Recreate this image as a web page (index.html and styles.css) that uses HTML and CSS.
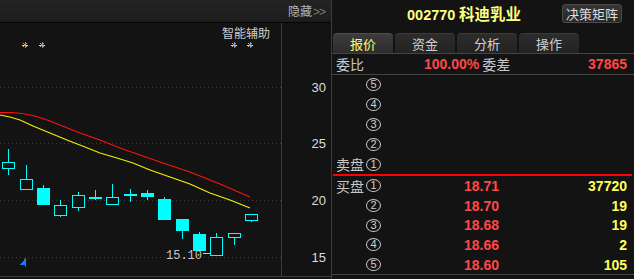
FILE: index.html
```html
<!DOCTYPE html>
<html>
  <head>
    <meta charset="utf-8" />
    <title>002770 科迪乳业</title>
    <link rel="stylesheet" href="styles.css">
  </head>
  <body>
    <div class="screen">
      <div class="chart-panel">
        <div class="chart-top">
          <span class="hide-link">隐藏<span class="chev">&gt;&gt;</span></span>
        </div>
        <svg class="chart" width="331" height="256" viewBox="0 23 331 256" shape-rendering="crispEdges">
          <g class="grid">
            <line x1="0" y1="87.5" x2="281" y2="87.5" />
            <line x1="0" y1="143.5" x2="281" y2="143.5" />
            <line x1="0" y1="200.5" x2="281" y2="200.5" />
            <line x1="0" y1="257.5" x2="281" y2="257.5" />
          </g>
          <line class="frame" x1="281.5" y1="23" x2="281.5" y2="277" />
          <line class="frame" x1="0" y1="276.5" x2="331" y2="276.5" />

          <g class="axis-text">
            <text x="326" y="92">30</text>
            <text x="326" y="148">25</text>
            <text x="326" y="205">20</text>
            <text x="326" y="262">15</text>
          </g>

          <text class="assist" x="270" y="38">智能辅助</text>
          <g class="star" transform="translate(25 45)"><line x1="0" y1="-3" x2="0" y2="3" class="s1" /><line x1="-3" y1="0" x2="3" y2="0" class="s2" /><line x1="-2" y1="-2" x2="2" y2="2" class="s3" /><line x1="-2" y1="2" x2="2" y2="-2" class="s3" /></g>
          <g class="star" transform="translate(42 45)"><line x1="0" y1="-3" x2="0" y2="3" class="s1" /><line x1="-3" y1="0" x2="3" y2="0" class="s2" /><line x1="-2" y1="-2" x2="2" y2="2" class="s3" /><line x1="-2" y1="2" x2="2" y2="-2" class="s3" /></g>
          <g class="star" transform="translate(234 45)"><line x1="0" y1="-3" x2="0" y2="3" class="s1" /><line x1="-3" y1="0" x2="3" y2="0" class="s2" /><line x1="-2" y1="-2" x2="2" y2="2" class="s3" /><line x1="-2" y1="2" x2="2" y2="-2" class="s3" /></g>
          <g class="star" transform="translate(250 45)"><line x1="0" y1="-3" x2="0" y2="3" class="s1" /><line x1="-3" y1="0" x2="3" y2="0" class="s2" /><line x1="-2" y1="-2" x2="2" y2="2" class="s3" /><line x1="-2" y1="2" x2="2" y2="-2" class="s3" /></g>

          <polyline class="ma-red" shape-rendering="auto" points="0,112.5 12,112.5 22,113.5 35,116 50,121 65,127 80,133 100,140 120,148 140,155 160,162 190,172 220,184 250,197" />
          <polyline class="ma-yellow" shape-rendering="auto" points="0,115 10,117 20,120 33,126 50,133 67,140 85,147 100,153 117,158 133,163 150,170 170,177 190,184 210,193 230,200 240,204 250,208" />

          <g class="candles">
            <line x1="8.5" y1="149" x2="8.5" y2="175" /><rect class="hollow" x="2.5" y="162.5" width="12" height="6" />
            <line x1="26.5" y1="165" x2="26.5" y2="179" /><rect class="hollow" x="20.5" y="179.5" width="12" height="10" />
            <line x1="43.5" y1="185" x2="43.5" y2="189" /><rect class="solid" x="37" y="188" width="13" height="17" />
            <line x1="60.5" y1="200" x2="60.5" y2="217" /><rect class="hollow" x="54.5" y="205.5" width="12" height="10" />
            <line x1="78.5" y1="192" x2="78.5" y2="211" /><rect class="hollow" x="72.5" y="195.5" width="12" height="12" />
            <line x1="95.5" y1="190" x2="95.5" y2="200" /><rect class="solid" x="89" y="197" width="13" height="2" />
            <line x1="112.5" y1="184" x2="112.5" y2="197" /><rect class="hollow" x="106.5" y="197.5" width="12" height="7" />
            <line x1="130.5" y1="189" x2="130.5" y2="202" /><rect class="solid" x="124" y="194" width="13" height="2" />
            <line x1="147.5" y1="190" x2="147.5" y2="200" /><rect class="solid" x="141" y="193" width="13" height="4" />
            <line x1="164.5" y1="197" x2="164.5" y2="200" /><rect class="solid" x="158" y="199" width="13" height="21" />
            <line x1="182.5" y1="230" x2="182.5" y2="239" /><rect class="solid" x="176" y="219" width="13" height="12" />
            <line x1="199.5" y1="232" x2="199.5" y2="234" /><rect class="solid" x="193" y="233.5" width="13" height="17" />
            <line x1="216.5" y1="232.5" x2="216.5" y2="237" /><rect class="hollow" x="210.5" y="237.5" width="12" height="18" />
            <line x1="234.5" y1="237" x2="234.5" y2="245" /><rect class="hollow" x="228.5" y="233.5" width="12" height="4" />
            <line x1="251.5" y1="220" x2="251.5" y2="222" /><rect class="hollow" x="245.5" y="214.5" width="12" height="6" />
          </g>

          <text class="low-mark" x="202" y="259">15.10</text>
          <line class="low-dash" x1="203" y1="253.5" x2="210" y2="253.5" />

          <polygon class="flag" points="20,265 25.5,258 25.5,265" />
          <line class="flag-pole" x1="25.5" y1="258" x2="25.5" y2="267" />
        </svg>
      </div>

      <div class="quote-panel">
        <div class="quote-head">
          <span class="stock-title"><span class="stock-code">002770</span> 科迪乳业</span>
          <button class="btn-matrix">决策矩阵</button>
        </div>

        <div class="tabs">
          <div class="tab active">报价</div>
          <div class="tab">资金</div>
          <div class="tab">分析</div>
          <div class="tab">操作</div>
        </div>

        <div class="ratio-row">
          <span class="label ratio-label">委比</span>
          <span class="num red">100.00%</span>
          <span class="label ratio-diff">委差</span>
          <span class="num red push-right">37865</span>
        </div>

        <div class="book sell">
          <div class="book-row"><span class="label"></span><span class="seq">5</span><span class="num red"></span><span class="num yellow"></span></div>
          <div class="book-row"><span class="label"></span><span class="seq">4</span><span class="num red"></span><span class="num yellow"></span></div>
          <div class="book-row"><span class="label"></span><span class="seq">3</span><span class="num red"></span><span class="num yellow"></span></div>
          <div class="book-row"><span class="label"></span><span class="seq">2</span><span class="num red"></span><span class="num yellow"></span></div>
          <div class="book-row"><span class="label">卖盘</span><span class="seq">1</span><span class="num red"></span><span class="num yellow"></span></div>
        </div>

        <div class="book-split"></div>

        <div class="book buy">
          <div class="book-row"><span class="label">买盘</span><span class="seq">1</span><span class="num red">18.71</span><span class="num yellow">37720</span></div>
          <div class="book-row"><span class="label"></span><span class="seq">2</span><span class="num red">18.70</span><span class="num yellow">19</span></div>
          <div class="book-row"><span class="label"></span><span class="seq">3</span><span class="num red">18.68</span><span class="num yellow">19</span></div>
          <div class="book-row"><span class="label"></span><span class="seq">4</span><span class="num red">18.66</span><span class="num yellow">2</span></div>
          <div class="book-row"><span class="label"></span><span class="seq">5</span><span class="num red">18.60</span><span class="num yellow">105</span></div>
        </div>
      </div>
    </div>
  </body>
</html>
```

FILE: styles.css
```css
body {
  margin: 0;
  background-color: #131313;
  font-family: "Noto Sans CJK SC", "Liberation Sans", sans-serif;
  color: #c8c8c8;
}
.screen {
  display: flex;
  width: 634px;
  height: 279px;
  overflow: hidden;
}
.chart-panel {
  width: 331px;
  display: flex;
  flex-direction: column;
}
.chart-top {
  height: 22px;
  display: flex;
  justify-content: flex-end;
  align-items: center;
  padding-right: 6px;
  background: linear-gradient(#242424, #1c1c1c);
  border-bottom: 1px solid #050505;
}
.hide-link {
  font-size: 12px;
  line-height: 22px;
  color: #b4b4b4;
}
.chev {
  margin-left: 1px;
  color: #7a7a7a;
  font-family: "Liberation Sans", sans-serif;
  letter-spacing: -1px;
}
.chart {
  display: block;
}
.grid line {
  stroke: #3a3a3a;
  stroke-dasharray: 1 3;
}
.frame {
  stroke: #3c3c3c;
}
.axis-text text {
  font-family: "Liberation Sans", sans-serif;
  font-size: 13px;
  fill: #dcdcdc;
  text-anchor: end;
}
.assist {
  font-family: "Noto Sans CJK SC", sans-serif;
  font-size: 12px;
  fill: #cfcfcf;
  text-anchor: end;
}
.star .s1 {
  stroke: #5aa0ff;
}
.star .s2 {
  stroke: #d8d8d8;
}
.star .s3 {
  stroke: #d89a50;
}
.ma-red {
  fill: none;
  stroke: #ff1010;
  stroke-width: 1.2;
}
.ma-yellow {
  fill: none;
  stroke: #f0f000;
  stroke-width: 1.2;
}
.candles line {
  stroke: #00ffff;
}
.candles .hollow {
  fill: #131313;
  stroke: #00ffff;
}
.candles .solid {
  fill: #00ffff;
}
.low-mark {
  font-family: "Liberation Mono", monospace;
  font-size: 12px;
  fill: #c8c8c8;
  text-anchor: end;
}
.low-dash {
  stroke: #c8c8c8;
}
.flag {
  fill: #1a78ff;
}
.flag-pole {
  stroke: #1a78ff;
}

.quote-panel {
  flex: 1;
  border-left: 1px solid #3c3c3c;
  display: flex;
  flex-direction: column;
  background-color: #131313;
}
.quote-head {
  height: 33px;
  display: flex;
  align-items: flex-start;
  padding-left: 75px;
  padding-top: 4px;
  box-sizing: border-box;
}
.stock-title {
  font-size: 15.5px;
  font-weight: bold;
  line-height: 19px;
  color: #ffff80;
}
.stock-code {
  font-family: "Liberation Sans", sans-serif;
  font-size: 14.5px;
}
.btn-matrix {
  margin-left: auto;
  margin-right: 12px;
  height: 19px;
  width: 60px;
  padding: 0;
  font-family: "Noto Sans CJK SC", sans-serif;
  font-size: 13px;
  line-height: 17px;
  color: #dcdcdc;
  background: linear-gradient(#353535, #282828);
  border: 1px solid #4a4a4a;
  border-radius: 3px;
}
.tabs {
  display: flex;
  gap: 2px;
  padding-left: 1px;
  border-bottom: 1px solid #444;
}
.tab {
  width: 60px;
  height: 20px;
  box-sizing: border-box;
  text-align: center;
  font-size: 13px;
  line-height: 20px;
  color: #cfcfcf;
  background: linear-gradient(#2c2c2c, #232323);
  border-top: 1px solid #3a3a3a;
  border-radius: 4px 4px 0 0;
}
.tab.active {
  color: #ffff66;
  background: linear-gradient(#3c3c3c, #2c2c2c);
  border-top-color: #4e4e4e;
}
.ratio-row {
  height: 20px;
  display: flex;
  align-items: center;
  padding: 0 7px 0 4px;
  border-bottom: 1px solid #444;
}
.label {
  font-size: 14px;
  color: #c8c8c8;
}
.ratio-label {
  width: 88px;
}
.ratio-diff {
  margin-left: 3px;
}
.num {
  font-family: "Liberation Sans", sans-serif;
  font-size: 14px;
  font-weight: bold;
  text-align: right;
}
.red {
  color: #ff4848;
}
.yellow {
  color: #ffff5a;
}
.push-right {
  margin-left: auto;
}
.book {
  display: flex;
  flex-direction: column;
  padding: 0 7px 0 4px;
}
.book-row {
  height: 19.7px;
  display: grid;
  grid-template-columns: 30px 15px 1fr 128px;
  align-items: center;
}
.book.sell .book-row {
  height: 19.8px;
}
.seq {
  width: 13px;
  height: 11px;
  border: 1px solid #c8c8c8;
  border-radius: 50%;
  font-family: "Liberation Sans", sans-serif;
  font-size: 11px;
  line-height: 11px;
  text-align: center;
  color: #d0d0d0;
}
.book-split {
  height: 2px;
  margin: 0 2px 0 1px;
  background-color: #ff0000;
}
.book.buy {
  border-bottom: 1px solid #444;
}
```
